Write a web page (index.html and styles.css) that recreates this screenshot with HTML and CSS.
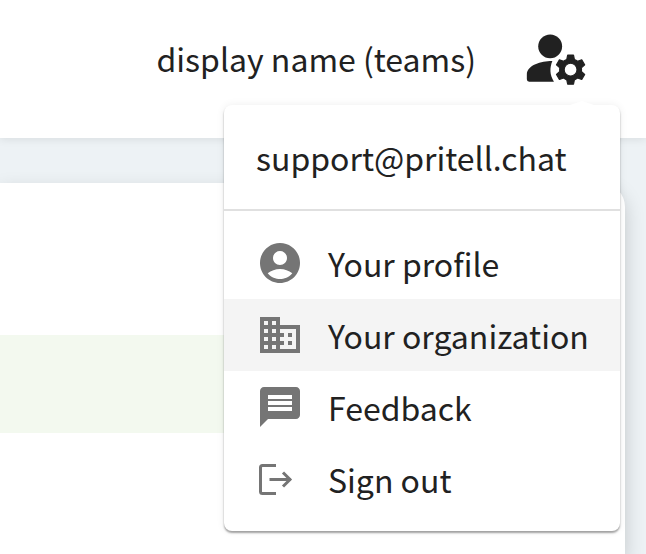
FILE: index.html
```html
<!DOCTYPE html>
<html lang="en">
<head>
    <meta charset="UTF-8">
    <meta name="viewport" content="width=device-width, initial-scale=1.0">
    <title>Account</title>
    <link rel="stylesheet" href="styles.css">
</head>
<body>
    <header class="topbar">
        <span class="user-name">display name (teams)</span>
        <button class="account-button" type="button" aria-label="Account menu" aria-expanded="true">
            <svg viewBox="0 0 24 24">
                <circle cx="10" cy="8" r="4.1"/>
                <path d="M10.75 13.05C7.2 13 2 14.4 2 17.7V19.3Q2 20.1 2.8 20.1H11.3C9.8 17.8 9.8 15.4 10.75 13.05z"/>
                <path class="gear" d="M20.75 16c0-.22-.03-.42-.06-.63l1.14-1.01-1-1.73-1.45.49c-.32-.27-.68-.48-1.08-.63L18 11h-2l-.3 1.49c-.4.15-.76.36-1.08.63l-1.45-.49-1 1.73 1.14 1.01c-.03.21-.06.41-.06.63s.03.42.06.63l-1.14 1.01 1 1.73 1.45-.49c.32.27.68.48 1.08.63L16 21h2l.3-1.49c.4-.15.76-.36 1.08-.63l1.45.49 1-1.73-1.14-1.01c.03-.21.06-.41.06-.63zM17 18.2c-1.22 0-2.2-.98-2.2-2.2s.98-2.2 2.2-2.2 2.2.98 2.2 2.2-.98 2.2-2.2 2.2z"/>
            </svg>
        </button>
        <div class="menu">
            <p class="menu-email">support@pritell.chat</p>
            <nav class="menu-list">
                <a class="menu-item" href="#">
                    <svg viewBox="0 0 24 24"><path d="M12 2C6.48 2 2 6.48 2 12s4.48 10 10 10 10-4.48 10-10S17.52 2 12 2zm0 4c1.93 0 3.5 1.57 3.5 3.5S13.93 13 12 13s-3.5-1.57-3.5-3.5S10.07 6 12 6zm0 14c-2.03 0-4.43-.82-6.14-2.88C7.55 15.8 9.68 15 12 15s4.45.8 6.14 2.12C16.43 19.18 14.03 20 12 20z"/></svg>
                    <span>Your profile</span>
                </a>
                <a class="menu-item active" href="#">
                    <svg viewBox="0 0 24 24"><path d="M12 7V3H2v18h20V7H12zM6 19H4v-2h2v2zm0-4H4v-2h2v2zm0-4H4V9h2v2zm0-4H4V5h2v2zm4 12H8v-2h2v2zm0-4H8v-2h2v2zm0-4H8V9h2v2zm0-4H8V5h2v2zm10 12h-8v-2h2v-2h-2v-2h2v-2h-2V9h8v10zm-2-8h-2v2h2v-2zm0 4h-2v2h2v-2z"/></svg>
                    <span>Your organization</span>
                </a>
                <a class="menu-item" href="#">
                    <svg viewBox="0 0 24 24"><path d="M20 2H4c-1.1 0-2 .9-2 2v18l4-4h14c1.1 0 2-.9 2-2V4c0-1.1-.9-2-2-2zm-2 12H6v-2h12v2zm0-3H6V9h12v2zm0-3H6V6h12v2z"/></svg>
                    <span>Feedback</span>
                </a>
                <a class="menu-item" href="#">
                    <svg class="line-icon" viewBox="0 0 48 48"><path d="M20 10.500H6.500Q4.500 10.500 4.500 12.500V36.500Q4.500 38.500 6.500 38.500H20M13.500 24.500H35M27 17.500l7 7-7 7"/></svg>
                    <span>Sign out</span>
                </a>
            </nav>
        </div>
    </header>
    <main class="content">
        <section class="card">
            <div class="highlight"></div>
        </section>
    </main>
</body>
</html>
```
FILE: styles.css
```css
* {
    box-sizing: border-box;
}
body {
    margin: 0;
    min-height: 100vh;
    display: flex;
    flex-direction: column;
    font-family: "Noto Sans CJK SC", "Noto Sans", sans-serif;
    font-size: 32px;
    line-height: 48px;
    color: #212121;
    background-color: #edf2f5;
}
.topbar {
    position: relative;
    z-index: 1;
    display: flex;
    justify-content: flex-end;
    align-items: center;
    gap: 45px;
    padding: 23px 55px 45px 16px;
    background-color: white;
    box-shadow: 0 2px 8px rgba(0, 0, 0, 0.08);
}
.account-button {
    width: 70px;
    height: 70px;
    padding: 0;
    border: none;
    background: none;
    color: #212121;
    cursor: pointer;
}
.account-button svg {
    display: block;
    width: 100%;
    fill: currentColor;
}
.gear {
    stroke: currentColor;
    stroke-width: 0.4;
    stroke-linejoin: round;
}
.menu {
    position: absolute;
    top: 105px;
    right: 26px;
    min-width: 396px;
    border-radius: 8px;
    background-color: white;
    box-shadow: 0 2px 2px rgba(0, 0, 0, 0.35), 0 0 8px rgba(0, 0, 0, 0.07);
}
.menu::before {
    content: "";
    position: absolute;
    top: -4px;
    right: 26px;
    border: 12px solid transparent;
    border-top: none;
    border-bottom: 4px solid white;
}
.menu-email {
    margin: 0;
    padding: 28px 32px;
    border-bottom: 2px solid #e0e0e0;
}
.menu-list {
    padding: 16px 0;
}
.menu-item {
    display: flex;
    align-items: center;
    gap: 24px;
    padding: 12px 24px 12px 32px;
    color: inherit;
    text-decoration: none;
}
.menu-item.active,
.menu-item:hover {
    background-color: #f4f4f4;
}
.menu-item svg {
    width: 48px;
    height: 48px;
    fill: #757575;
}
.menu-item .line-icon {
    fill: none;
    stroke: #757575;
    stroke-width: 3;
}
.content {
    flex: 1;
    display: flex;
    padding: 45px 21px 0 0;
}
.card {
    flex: 1;
    padding: 152px 32px 0 0;
    border-top-right-radius: 24px;
    background-color: white;
    box-shadow: 0 8px 20px rgba(0, 0, 0, 0.18);
}
.highlight {
    height: 98px;
    background-color: #f3f9ef;
}
```
